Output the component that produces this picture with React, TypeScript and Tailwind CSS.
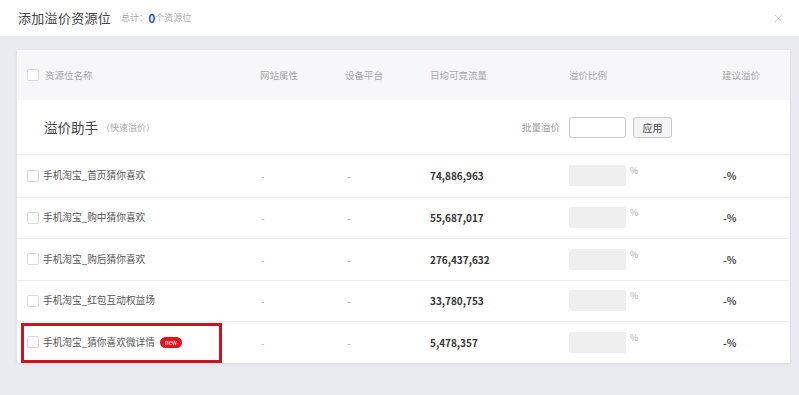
import React from "react";
import { X } from "lucide-react";

const rows = [
  { name: "手机淘宝_首页猜你喜欢", flow: "74,886,963" },
  { name: "手机淘宝_购中猜你喜欢", flow: "55,687,017" },
  { name: "手机淘宝_购后猜你喜欢", flow: "276,437,632" },
  { name: "手机淘宝_红包互动权益场", flow: "33,780,753" },
  { name: "手机淘宝_猜你喜欢微详情", flow: "5,478,357", isNew: true },
];

const cols = "grid grid-cols-[233px_85px_85px_139px_153px_1fr] items-center pl-[10px]";

function Checkbox() {
  return <span className="inline-block w-[12px] h-[12px] border border-[#d9d9d9] rounded-[2px] bg-white shrink-0" />;
}

export default function App() {
  return (
    <div
      className="w-[799px] h-[395px] overflow-hidden bg-[#e9ebf1] text-[#555]"
      style={{ fontFamily: '"Noto Sans CJK SC", "Noto Sans", sans-serif' }}
    >
      {/* header */}
      <div className="h-[36px] bg-white flex items-center pl-[18px] pr-[14px]">
        <span className="text-[13px] text-[#444] tracking-[0.3px]">添加溢价资源位</span>
        <span className="ml-[10px] text-[9px] text-[#aaa] flex items-center">
          总计：
          <b className="text-[12px] text-[#2c5cc5] font-bold">0</b>
          个资源位
        </span>
        <X size={13} strokeWidth={1} className="ml-auto text-[#aaa]" />
      </div>

      <div className="pt-[14px] pl-[17px] pr-[9px]">
        <div className="relative bg-white shadow-[0_1px_3px_rgba(0,0,0,0.08)]">
          {/* column header */}
          <div className={`${cols} h-[50px] bg-[#f7f7f9] text-[9.5px] text-[#a5a5a5]`}>
            <div className="flex items-center gap-[6px]">
              <Checkbox />
              <span>资源位名称</span>
            </div>
            <div>网站属性</div>
            <div>设备平台</div>
            <div>日均可竞流量</div>
            <div>溢价比例</div>
            <div>建议溢价</div>
          </div>

          {/* helper row */}
          <div className="h-[55px] flex items-center pl-[27px] pr-[118px] border-b border-[#ededed]">
            <span className="text-[13.5px] text-[#444]">溢价助手</span>
            <span className="ml-[3px] text-[9px] text-[#aaa] mt-[2px]">（快速溢价）</span>
            <span className="ml-auto text-[9.5px] text-[#999]">批量溢价</span>
            <span className="ml-[9px] w-[57px] h-[21px] border border-[#c9c9c9] rounded-[3px] bg-white" />
            <button className="ml-[7px] w-[39px] h-[21px] border border-[#c9c9c9] rounded-[3px] bg-[#f4f4f6] text-[10px] text-[#444]">
              应用
            </button>
          </div>

          {rows.map((r, i) => (
            <div
              key={r.name}
              className={`${cols} h-[41.5px] text-[10px] ${i > 0 ? "border-t border-[#ededed]" : ""}`}
            >
              <div className="flex items-center gap-[4px]">
                <Checkbox />
                <span className="text-[#555] text-[9.7px]">{r.name}</span>
                {r.isNew && (
                  <span className="ml-[1px] h-[11px] px-[5px] rounded-full bg-[#e1141c] text-white text-[6px] leading-[11px]">
                    new
                  </span>
                )}
              </div>
              <div className="pl-[1px] text-[#aaa]">-</div>
              <div className="pl-[2px] text-[#aaa]">-</div>
              <div className="font-bold text-[#333]">{r.flow}</div>
              <div className="flex items-start">
                <span className="w-[57px] h-[21px] rounded-[2px] bg-[#efefef]" />
                <span className="ml-[4px] text-[9px] text-[#aaa] -mt-[1px]">%</span>
              </div>
              <div className="pl-[1px] font-bold text-[#444]">-%</div>
            </div>
          ))}

          {/* annotation highlight */}
          <div className="absolute left-[4px] bottom-0 w-[201px] h-[40px] border-[3px] border-[#c9141f]" />
        </div>
      </div>
    </div>
  );
}
